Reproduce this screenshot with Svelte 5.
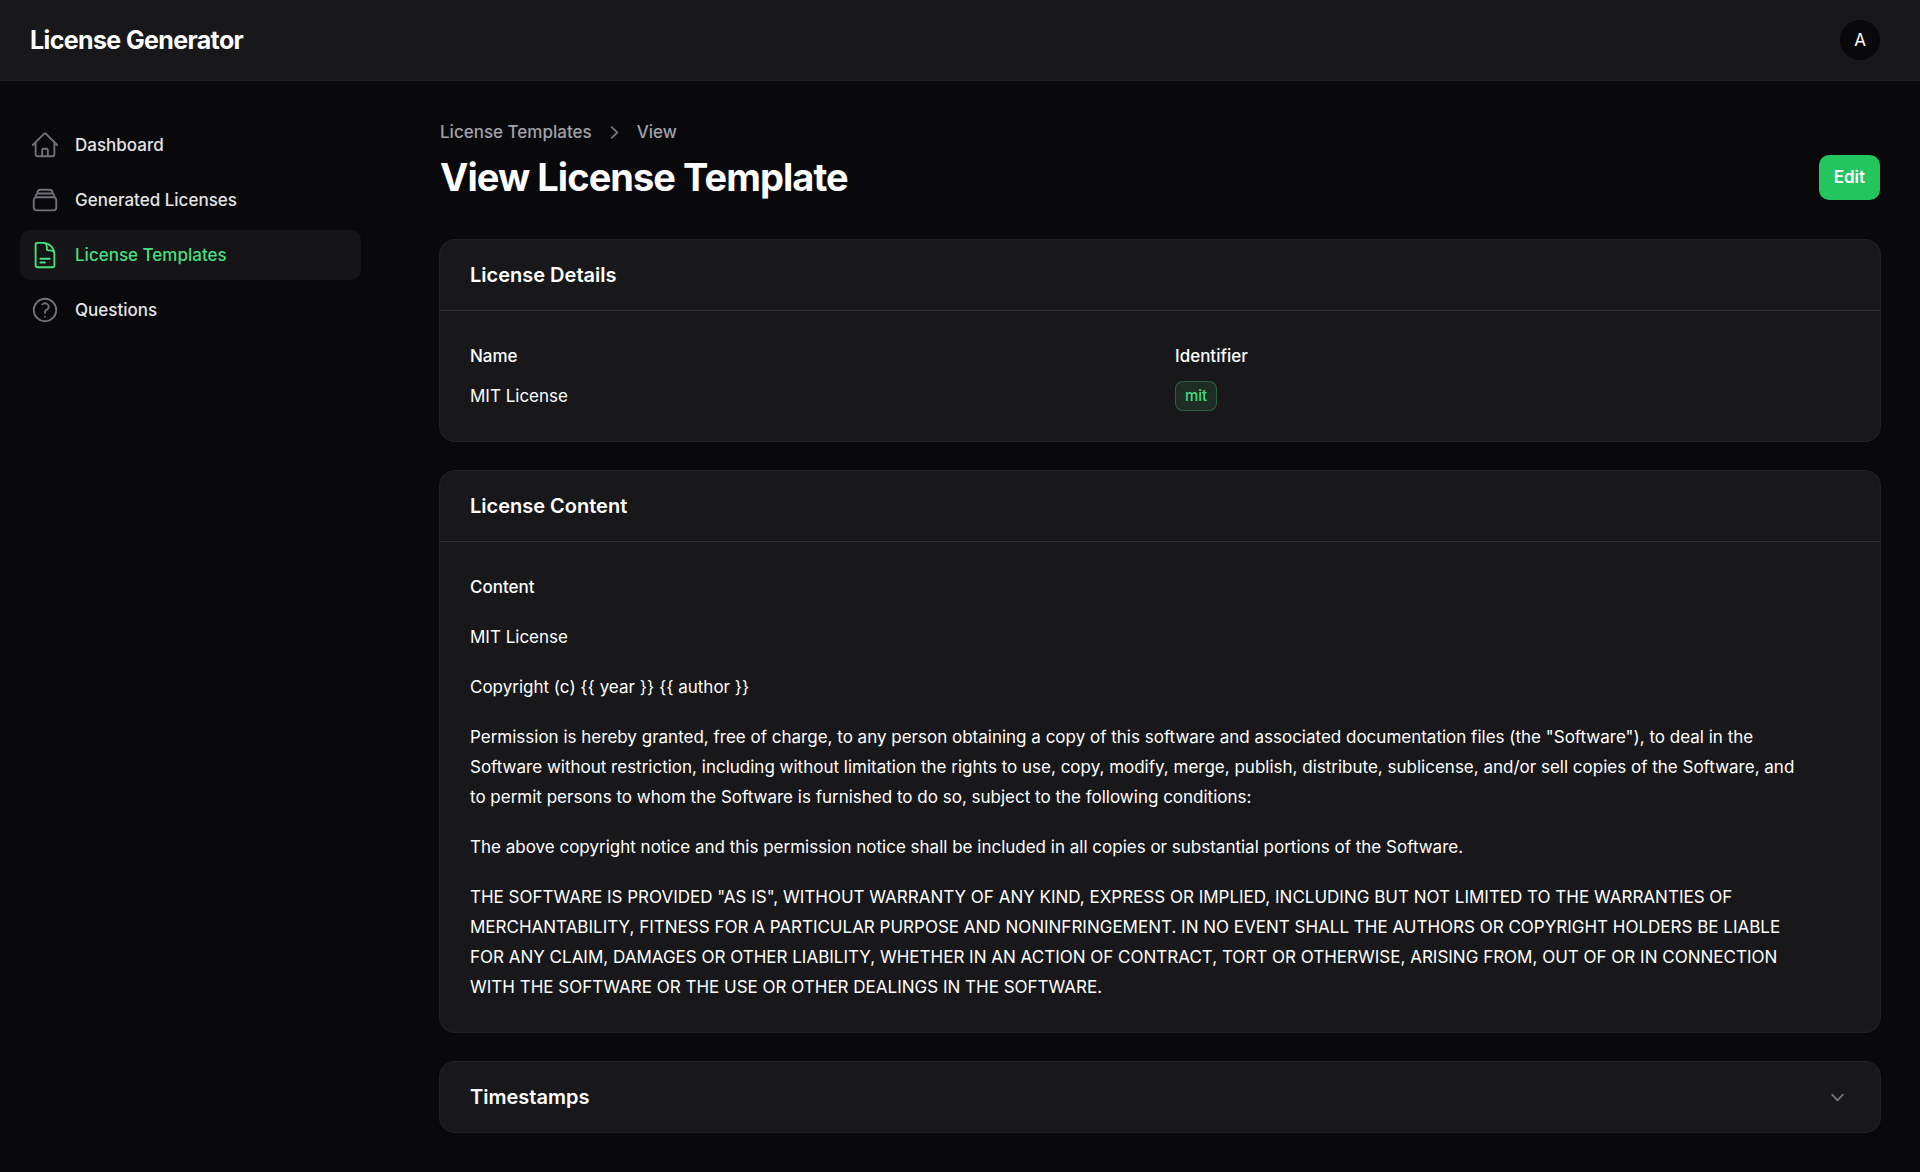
<script>
  const nav = [
    {
      label: 'Dashboard',
      icon: 'M2.25 12l8.954-8.955c.44-.439 1.152-.439 1.591 0L21.75 12M4.5 9.75v10.125c0 .621.504 1.125 1.125 1.125H9.75v-4.875c0-.621.504-1.125 1.125-1.125h2.25c.621 0 1.125.504 1.125 1.125V21h4.125c.621 0 1.125-.504 1.125-1.125V9.75M8.25 21h8.25'
    },
    {
      label: 'Generated Licenses',
      icon: 'M6 6.878V6a2.25 2.25 0 012.25-2.25h7.5A2.25 2.25 0 0118 6v.878m-12 0c.235-.083.487-.128.75-.128h10.5c.263 0 .515.045.75.128m-12 0A2.25 2.25 0 004.5 9v.878m13.5-3A2.25 2.25 0 0119.5 9v.878m0 0a2.246 2.246 0 00-.75-.128H5.25c-.263 0-.515.045-.75.128m15 0A2.25 2.25 0 0121 12v6a2.25 2.25 0 01-2.25 2.25H5.25A2.25 2.25 0 013 18v-6c0-.98.626-1.813 1.5-2.122'
    },
    {
      label: 'License Templates',
      active: true,
      icon: 'M19.5 14.25v-2.625a3.375 3.375 0 00-3.375-3.375h-1.5A1.125 1.125 0 0113.5 7.125v-1.5a3.375 3.375 0 00-3.375-3.375H8.25m0 12.75h7.5m-7.5 3H12M10.5 2.25H5.625c-.621 0-1.125.504-1.125 1.125v17.25c0 .621.504 1.125 1.125 1.125h12.75c.621 0 1.125-.504 1.125-1.125V11.25a9 9 0 00-9-9z'
    },
    {
      label: 'Questions',
      icon: 'M9.879 7.519c1.171-1.025 3.071-1.025 4.242 0 1.172 1.025 1.172 2.687 0 3.712-.203.179-.43.326-.67.442-.745.361-1.45.999-1.45 1.827v.75M21 12a9 9 0 11-18 0 9 9 0 0118 0zm-9 5.25h.008v.008H12v-.008z'
    }
  ];

  const paragraphs = [
    'MIT License',
    'Copyright (c) {{ year }} {{ author }}',
    'Permission is hereby granted, free of charge, to any person obtaining a copy of this software and associated documentation files (the "Software"), to deal in the Software without restriction, including without limitation the rights to use, copy, modify, merge, publish, distribute, sublicense, and/or sell copies of the Software, and to permit persons to whom the Software is furnished to do so, subject to the following conditions:',
    'The above copyright notice and this permission notice shall be included in all copies or substantial portions of the Software.',
    'THE SOFTWARE IS PROVIDED "AS IS", WITHOUT WARRANTY OF ANY KIND, EXPRESS OR IMPLIED, INCLUDING BUT NOT LIMITED TO THE WARRANTIES OF MERCHANTABILITY, FITNESS FOR A PARTICULAR PURPOSE AND NONINFRINGEMENT. IN NO EVENT SHALL THE AUTHORS OR COPYRIGHT HOLDERS BE LIABLE FOR ANY CLAIM, DAMAGES OR OTHER LIABILITY, WHETHER IN AN ACTION OF CONTRACT, TORT OR OTHERWISE, ARISING FROM, OUT OF OR IN CONNECTION WITH THE SOFTWARE OR THE USE OR OTHER DEALINGS IN THE SOFTWARE.'
  ];

  let expanded = $state(false);
</script>

<header class="topbar">
  <a class="brand" href="#home">License Generator</a>
  <button class="avatar" type="button" aria-label="User menu">A</button>
</header>

<div class="layout">
  <nav class="sidebar" aria-label="Main">
    {#each nav as item}
      <a class="nav-item" class:active={item.active} href="#nav" aria-current={item.active ? 'page' : undefined}>
        <svg viewBox="0 0 24 24" aria-hidden="true"><path d={item.icon} /></svg>
        <span>{item.label}</span>
      </a>
    {/each}
  </nav>

  <main class="main">
    <div class="page-header">
      <div>
        <nav class="crumbs" aria-label="Breadcrumb">
          <a href="#templates">License Templates</a>
          <svg viewBox="0 0 20 20" aria-hidden="true">
            <path d="M7.21 14.77a.75.75 0 01.02-1.06L11.168 10 7.23 6.29a.75.75 0 111.04-1.08l4.5 4.25a.75.75 0 010 1.08l-4.5 4.25a.75.75 0 01-1.06-.02z" />
          </svg>
          <span>View</span>
        </nav>
        <h1>View License Template</h1>
      </div>
      <a class="edit" href="#edit">Edit</a>
    </div>

    <section class="card">
      <h2 class="card-title">License Details</h2>
      <dl class="card-body fields">
        <div class="field">
          <dt>Name</dt>
          <dd>MIT License</dd>
        </div>
        <div class="field">
          <dt>Identifier</dt>
          <dd><span class="badge">mit</span></dd>
        </div>
      </dl>
    </section>

    <section class="card">
      <h2 class="card-title">License Content</h2>
      <div class="card-body prose">
        <h3>Content</h3>
        {#each paragraphs as text}
          <p>{text}</p>
        {/each}
      </div>
    </section>

    <section class="card">
      <h2>
        <button class="toggle" type="button" aria-expanded={expanded} onclick={() => (expanded = !expanded)}>
          Timestamps
          <svg viewBox="0 0 20 20" aria-hidden="true">
            <path d="M5.23 7.21a.75.75 0 011.06.02L10 11.168l3.71-3.938a.75.75 0 111.08 1.04l-4.25 4.5a.75.75 0 01-1.08 0l-4.25-4.5a.75.75 0 01.02-1.06z" />
          </svg>
        </button>
      </h2>
    </section>
  </main>
</div>

<style>
  :global(body) {
    margin: 0;
    background: #09090b;
    color: #fff;
    font-family: Inter, sans-serif;
    font-size: 17px;
    line-height: 30px;
  }

  h1, h2, h3, p, dl, dd {
    margin: 0;
  }

  a {
    color: inherit;
    text-decoration: none;
  }

  button {
    border: 0;
    color: inherit;
    font: inherit;
    cursor: pointer;
  }

  .topbar {
    display: flex;
    align-items: center;
    justify-content: space-between;
    height: 80px;
    padding: 0 40px 0 30px;
    background: #18181b;
    box-shadow: 0 0 0 1px rgb(255 255 255 / 10%);
  }

  .brand {
    font-size: 25px;
    font-weight: 700;
    letter-spacing: -0.025em;
  }

  .avatar {
    width: 40px;
    height: 40px;
    padding: 0;
    border-radius: 50%;
    background: #09090b;
  }

  .layout {
    display: flex;
  }

  .sidebar {
    display: flex;
    flex: 0 0 400px;
    flex-direction: column;
    gap: 5px;
    box-sizing: border-box;
    padding: 40px 39px 40px 20px;
  }

  .nav-item {
    display: flex;
    align-items: center;
    gap: 15px;
    padding: 10px;
    border-radius: 10px;
    color: #e4e4e7;
    font-weight: 500;
  }

  .nav-item svg {
    width: 30px;
    height: 30px;
    fill: none;
    stroke: #71717a;
    stroke-width: 1.5;
    stroke-linecap: round;
    stroke-linejoin: round;
  }

  .nav-item.active {
    background: rgb(255 255 255 / 5%);
    color: #4ade80;
  }

  .nav-item.active svg {
    stroke: #4ade80;
  }

  .main {
    display: flex;
    flex: 1;
    flex-direction: column;
    gap: 30px;
    min-width: 0;
    padding: 40px;
  }

  .page-header {
    display: flex;
    align-items: flex-end;
    justify-content: space-between;
    margin-bottom: 10px;
  }

  .crumbs {
    display: flex;
    align-items: center;
    gap: 10px;
    margin-bottom: 10px;
    color: #a1a1aa;
    font-weight: 500;
    line-height: 25px;
  }

  .crumbs svg,
  .toggle svg {
    width: 25px;
    height: 25px;
    fill: #71717a;
  }

  h1 {
    font-size: 38px;
    font-weight: 700;
    line-height: 45px;
    letter-spacing: -0.025em;
  }

  .edit {
    padding: 10px 15px;
    border-radius: 10px;
    background: #22c55e;
    font-weight: 600;
    line-height: 25px;
  }

  .card {
    border-radius: 15px;
    background: #18181b;
    box-shadow: 0 0 0 1px rgb(255 255 255 / 10%);
  }

  h2 {
    font-size: 20px;
    font-weight: 600;
  }

  .card-title {
    padding: 20px 30px;
  }

  .card-body {
    padding: 30px;
    border-top: 1px solid rgb(255 255 255 / 10%);
  }

  .fields {
    display: grid;
    grid-template-columns: 1fr 1fr;
    gap: 30px;
  }

  .field {
    display: grid;
    gap: 10px;
  }

  dt,
  h3 {
    font-size: 17px;
    font-weight: 500;
  }

  dd {
    display: flex;
  }

  .badge {
    padding: 0 10px;
    border-radius: 8px;
    background: rgb(74 222 128 / 10%);
    box-shadow: inset 0 0 0 1px rgb(74 222 128 / 30%);
    color: #4ade80;
    font-size: 15px;
    font-weight: 500;
  }

  .prose {
    display: grid;
    gap: 20px;
    padding-right: 70px;
  }

  .toggle {
    display: flex;
    align-items: center;
    justify-content: space-between;
    width: 100%;
    padding: 20px 30px;
    background: none;
  }
</style>
